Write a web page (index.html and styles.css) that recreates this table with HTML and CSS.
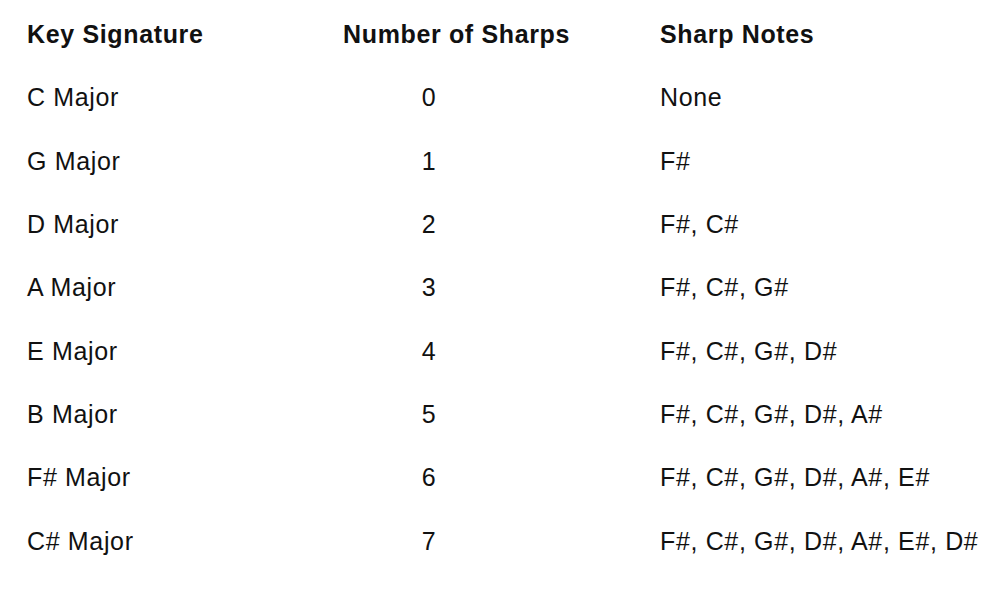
FILE: index.html
```html
<!DOCTYPE html>
<html>
<head>
<meta charset="utf-8">
<link rel="stylesheet" href="styles.css">
</head>
<body>
<div class="table">
  <div class="row head">
    <div class="c1">Key Signature</div>
    <div class="c2">Number of Sharps</div>
    <div class="c3">Sharp Notes</div>
  </div>
  <div class="row">
    <div class="c1">C Major</div>
    <div class="c2"><span class="num">0</span></div>
    <div class="c3">None</div>
  </div>
  <div class="row">
    <div class="c1">G Major</div>
    <div class="c2"><span class="num">1</span></div>
    <div class="c3">F#</div>
  </div>
  <div class="row">
    <div class="c1">D Major</div>
    <div class="c2"><span class="num">2</span></div>
    <div class="c3">F#, C#</div>
  </div>
  <div class="row">
    <div class="c1">A Major</div>
    <div class="c2"><span class="num">3</span></div>
    <div class="c3">F#, C#, G#</div>
  </div>
  <div class="row">
    <div class="c1">E Major</div>
    <div class="c2"><span class="num">4</span></div>
    <div class="c3">F#, C#, G#, D#</div>
  </div>
  <div class="row">
    <div class="c1">B Major</div>
    <div class="c2"><span class="num">5</span></div>
    <div class="c3">F#, C#, G#, D#, A#</div>
  </div>
  <div class="row">
    <div class="c1">F# Major</div>
    <div class="c2"><span class="num">6</span></div>
    <div class="c3">F#, C#, G#, D#, A#, E#</div>
  </div>
  <div class="row">
    <div class="c1">C# Major</div>
    <div class="c2"><span class="num">7</span></div>
    <div class="c3">F#, C#, G#, D#, A#, E#, D#</div>
  </div>
</div>
</body>
</html>
```
FILE: styles.css
```css
html, body {
  margin: 0;
  padding: 0;
  background: #ffffff;
}
body {
  font-family: "Liberation Sans", Arial, sans-serif;
  font-size: 25px;
  letter-spacing: 0.65px;
  color: #111111;
}
.table {
  padding: 3px 0 0 27px;
}
.row {
  display: grid;
  grid-template-columns: 316px 317px 1fr;
  height: 63.33px;
  line-height: 63.33px;
  white-space: nowrap;
}
.head {
  font-weight: bold;
}
.num {
  display: inline-block;
  width: 172px;
  text-align: center;
}
```
